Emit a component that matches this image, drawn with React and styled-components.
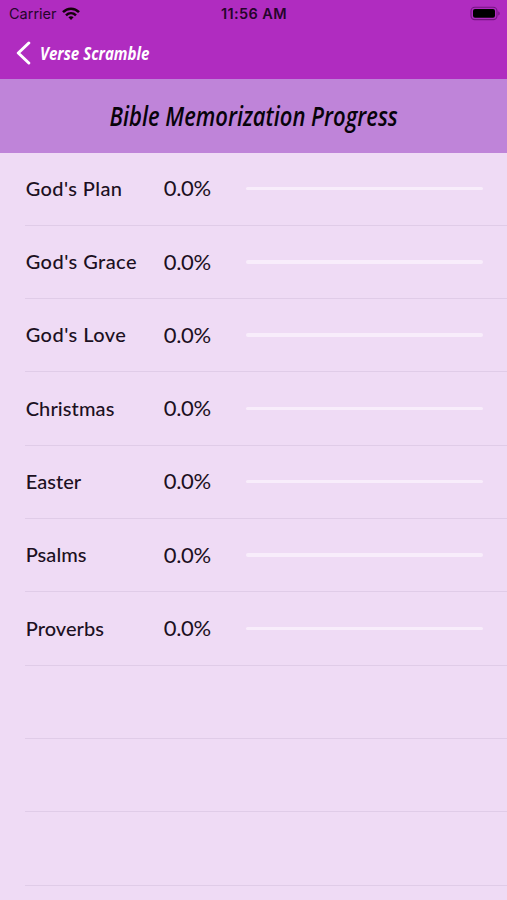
import React from "react";
import styled, { createGlobalStyle } from "styled-components";

const GlobalStyle = createGlobalStyle`
  * { box-sizing: border-box; }
  body { margin: 0; background: #efdbf5; }
`;

const Screen = styled.div`
  width: 507px;
  height: 900px;
  overflow: hidden;
  background: #efdbf5;
  color: #1c1022;
  font-family: Lato, sans-serif;
`;

const TopBar = styled.header`
  height: 79.4px;
  background: #b02cc0;
`;

const StatusBar = styled.div`
  display: grid;
  grid-template-columns: 1fr auto 1fr;
  align-items: center;
  height: 27px;
  padding: 0 7px 0 9px;
  color: #25052b;
  font-family: Inter, sans-serif;
  font-size: 14.5px;
  line-height: 27px;
`;

const Carrier = styled.div`
  display: flex;
  align-items: center;
  gap: 5px;
`;

const Clock = styled.div`
  padding-right: 1px;
  font-size: 14.5px;
  font-weight: 600;
  letter-spacing: 0.4px;
`;

const BatteryIcon = styled.svg`
  justify-self: end;
`;

const BackButton = styled.button`
  display: flex;
  align-items: center;
  gap: 9px;
  height: 52px;
  padding: 0 0 0 16px;
  border: 0;
  background: none;
  color: #fff;
  font-family: "Open Sans", sans-serif;
`;

const CondensedText = styled.span`
  display: block;
  flex: none;
  padding-top: ${(p) => p.$drop || 0}px;
  font-size: ${(p) => p.$size}px;
  font-weight: ${(p) => p.$weight};
  font-style: italic;
  line-height: 1.3;
  white-space: nowrap;
  transform: scaleX(${(p) => p.$scale});
  transform-origin: ${(p) => p.$origin};
`;

const TitleBand = styled.h1`
  display: flex;
  align-items: center;
  justify-content: center;
  height: 73.2px;
  margin: 0;
  padding-top: 1px;
  background: #bf84d9;
  color: #08030a;
  font-family: "Open Sans", sans-serif;
`;

const List = styled.ul`
  margin: 0;
  padding: 0 0 0 25px;
  list-style: none;
`;

const Row = styled.li`
  display: grid;
  grid-template-columns: 138px 82px 237.5px;
  align-items: center;
  height: 73.3px;
  padding-left: 0.7px;
  border-bottom: 1px solid #e0cce8;
`;

const Label = styled.span`
  padding-bottom: 2px;
  font-size: 20px;
  font-weight: 500;
  line-height: 26px;
  letter-spacing: ${(p) => p.$spacing}px;
  white-space: nowrap;
`;

const Percent = styled.span`
  padding-bottom: 1px;
  font-size: 22px;
  line-height: 26px;
  letter-spacing: -0.3px;
`;

const Track = styled.div`
  height: 3.5px;
  margin-bottom: 0.5px;
  border-radius: 2px;
  background: #f8edfb;
`;

const Fill = styled.div`
  height: 100%;
  border-radius: 2px;
  background: #b02cc0;
`;

const topics = [
  { name: "God's Plan", progress: 0, spacing: 0.4 },
  { name: "God's Grace", progress: 0, spacing: 0.45 },
  { name: "God's Love", progress: 0, spacing: 0.45 },
  { name: "Christmas", progress: 0, spacing: 0.1 },
  { name: "Easter", progress: 0, spacing: 0.05 },
  { name: "Psalms", progress: 0, spacing: 0.05 },
  { name: "Proverbs", progress: 0, spacing: 0.05 },
];

const emptyRows = [0, 1, 2, 3];

function Wifi() {
  return (
    <svg width="18" height="14" viewBox="0 0 18 14" fill="none" stroke="#14020a" strokeWidth="2.5">
      <path d="M1 5.1C5.5.5 12.5.5 17 5.1" />
      <path d="M4 8.3c2.9-2.8 7.1-2.8 10 0" />
      <path d="M6.4 10.3c1.5-1.3 3.7-1.3 5.2 0L9 13Z" fill="#14020a" stroke="none" />
    </svg>
  );
}

function Battery() {
  return (
    <BatteryIcon width="30" height="15" viewBox="0 0 30 15">
      <rect x="1" y="1.2" width="26" height="12.4" rx="3.8" fill="none" stroke="#741581" strokeWidth="1.1" />
      <rect x="3" y="3.1" width="22" height="8.7" rx="2" fill="#000" />
      <path d="M28.3 5.2c1.8.8 1.8 3.6 0 4.4Z" fill="#741581" />
    </BatteryIcon>
  );
}

export default function App() {
  return (
    <Screen>
      <GlobalStyle />
      <TopBar>
        <StatusBar>
          <Carrier>
            Carrier
            <Wifi />
          </Carrier>
          <Clock>11:56 AM</Clock>
          <Battery />
        </StatusBar>
        <BackButton>
          <svg width="15" height="24" viewBox="0 0 15 24" fill="none" stroke="#fff" strokeWidth="3" strokeLinecap="round" strokeLinejoin="round">
            <path d="M12.8 2 2.3 12l10.5 10" />
          </svg>
          <CondensedText $size={18} $weight={700} $scale={0.84} $origin="left center" $drop={1}>
            Verse Scramble
          </CondensedText>
        </BackButton>
      </TopBar>
      <TitleBand>
        <CondensedText $size={26.5} $weight={650} $scale={0.83} $origin="center">
          Bible Memorization Progress
        </CondensedText>
      </TitleBand>
      <List>
        {topics.map((t) => (
          <Row key={t.name}>
            <Label $spacing={t.spacing}>{t.name}</Label>
            <Percent>{t.progress.toFixed(1)}%</Percent>
            <Track>
              <Fill style={{ width: `${t.progress}%` }} />
            </Track>
          </Row>
        ))}
        {emptyRows.map((i) => (
          <Row key={i} />
        ))}
      </List>
    </Screen>
  );
}
